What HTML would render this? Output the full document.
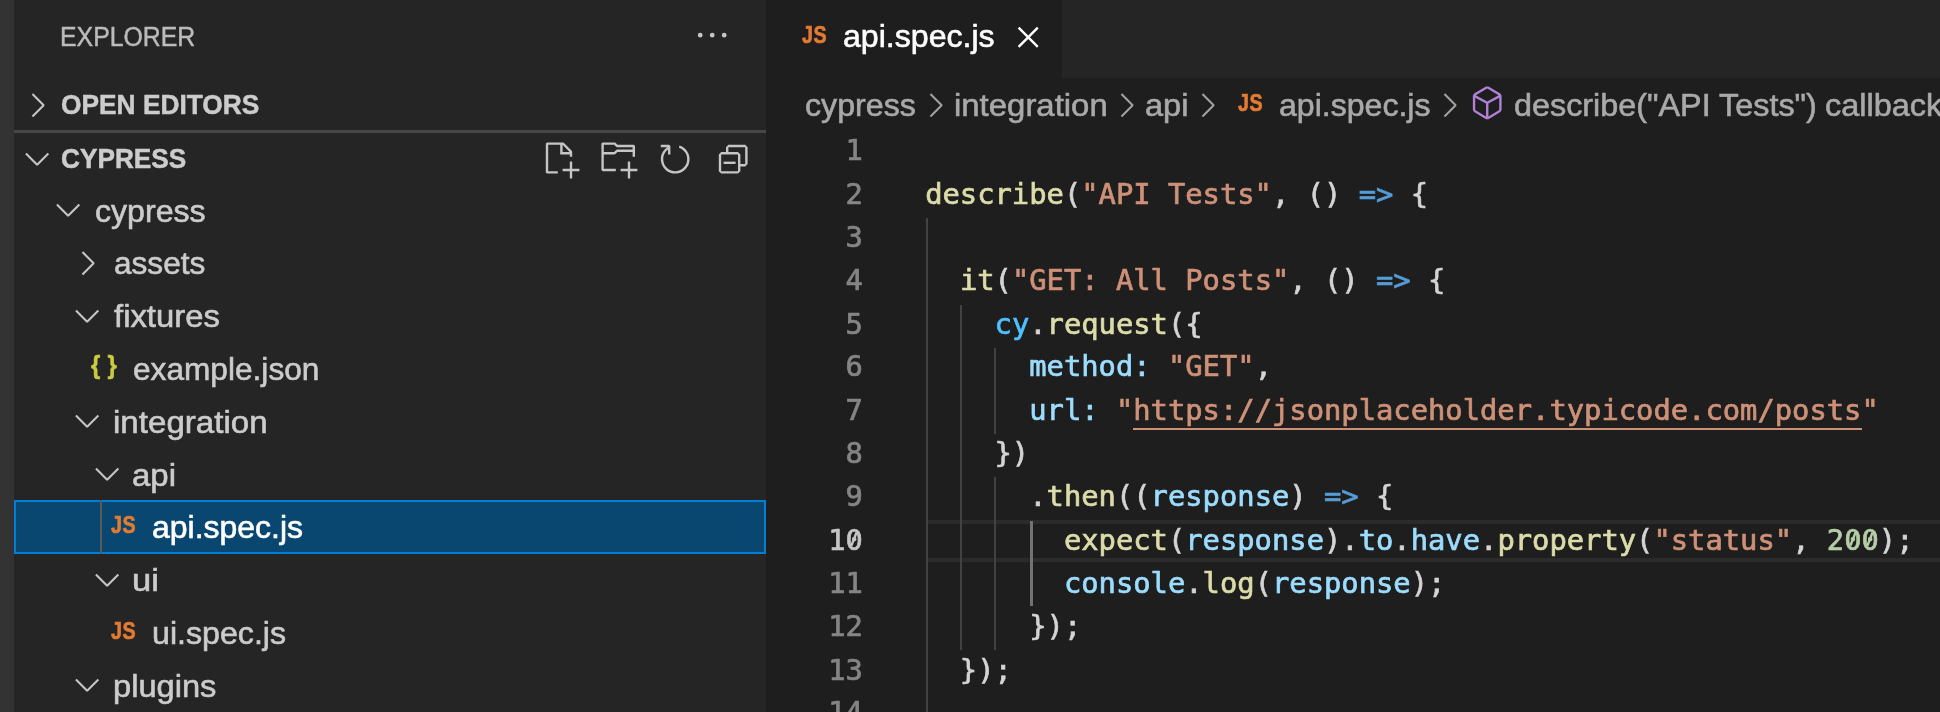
<!DOCTYPE html>
<html lang="en">
<head>
<meta charset="utf-8">
<title>api.spec.js - cypress</title>
<style>
html,body{margin:0;padding:0;}
body{width:1940px;height:712px;overflow:hidden;background:#1e1e1e;position:relative;
  font-family:"Liberation Sans",sans-serif;color:#cccccc;-webkit-font-smoothing:antialiased;}
.abs{position:absolute;}
#activity{left:0;top:0;width:14px;height:712px;background:#333333;}
#sidebar{left:14px;top:0;width:752px;height:712px;background:#252526;}
#tabbar{left:766px;top:0;width:1174px;height:78px;background:#252526;}
#tab{left:766px;top:0;width:296px;height:78px;background:#1e1e1e;}
.t{position:absolute;white-space:pre;line-height:1;transform-origin:0 0;}
#root{position:absolute;left:0;top:0;width:1940px;height:712px;will-change:transform;}
.ui{font-size:32.2px;line-height:33px;margin-top:0.3px;color:#cccccc;-webkit-text-stroke:0.6px currentColor;}
.hd{font-size:27px;color:#bbbbbb;-webkit-text-stroke:0.45px currentColor;}
.hb{font-size:27.6px;font-weight:bold;color:#cccccc;-webkit-text-stroke:0.5px #cccccc;}
.bc{font-size:32.2px;line-height:33px;margin-top:0.3px;color:#a9a9a9;-webkit-text-stroke:0.6px currentColor;}
svg.ic{position:absolute;width:38.4px;height:38.4px;fill:#c5c5c5;overflow:visible;}
.jsn{font-size:25.8px;font-weight:bold;color:#cbcb41;letter-spacing:7.6px;-webkit-text-stroke:0.5px #cbcb41;transform:scaleX(0.93);}
.js{position:absolute;font-weight:bold;color:#e37b33;font-size:24.6px;line-height:1;white-space:pre;transform-origin:0 0;transform:scaleX(0.80);-webkit-text-stroke:0.7px #e37b33;letter-spacing:0.6px;}
#sep{left:14px;top:129.7px;width:752px;height:3px;background:#474748;}
#sel{left:14px;top:500.2px;width:752px;height:53.4px;background:#094771;box-sizing:border-box;border:2.2px solid #007fd4;}
#selguide{left:99.9px;top:500.2px;width:2.3px;height:53.4px;background:#5a5a5a;}
/* editor */
.ln{position:absolute;left:780.7px;width:82.2px;text-align:right;font-family:"DejaVu Sans Mono","Liberation Mono",monospace;font-size:28.8px;line-height:43.2px;height:43.2px;color:#858585;white-space:pre;-webkit-text-stroke:0.7px currentColor;}
.cl{position:absolute;left:925.2px;font-family:"DejaVu Sans Mono","Liberation Mono",monospace;font-size:28.8px;line-height:43.2px;height:43.2px;color:#d4d4d4;white-space:pre;}
.cl span,.cl{-webkit-text-stroke:0.7px currentColor;}
.f{color:#dcdcaa}.s{color:#ce9178}.k{color:#569cd6}.v{color:#9cdcfe}.c{color:#4fc1ff}.n{color:#b5cea8}
.g{position:absolute;width:2.4px;background:#424242;}
.ga{position:absolute;width:2.5px;background:#727272;}
svg.z{position:absolute;overflow:visible;}
#hl{left:928.4px;top:520px;width:1012px;height:41.9px;box-sizing:border-box;border-top:4px solid #2b2b2b;border-bottom:4px solid #2b2b2b;}
#ul{left:1133px;top:427.8px;width:729px;height:2.4px;background:#ce9178;}
</style>
</head>
<body>
<div id="root">
<div id="activity" class="abs"></div>
<div id="sidebar" class="abs"></div>
<div id="tabbar" class="abs"></div>
<div id="tab" class="abs"></div>
<div id="sep" class="abs"></div>
<div id="sel" class="abs"></div>
<div id="selguide" class="abs"></div>

<!-- sidebar header -->
<div class="t hd" id="t_explorer" style="transform:scaleX(0.9197);margin-left:-2.03px;left:62px;top:24.3px;">EXPLORER</div>
<svg class="ic" style="left:692.5px;top:15.6px" viewBox="0 0 16 16"><path d="M4 8a1 1 0 1 1-2 0 1 1 0 0 1 2 0zm5 0a1 1 0 1 1-2 0 1 1 0 0 1 2 0zm5 0a1 1 0 1 1-2 0 1 1 0 0 1 2 0z"/></svg>

<svg class="ic" style="left:17.6px;top:86px" viewBox="0 0 16 16"><path fill-rule="evenodd" clip-rule="evenodd" d="M10.072 8.024L5.715 3.667l.618-.62L11 7.716v.618L6.333 13l-.618-.619 4.357-4.357z"/></svg>
<div class="t hb" id="t_open" style="transform:scaleX(0.9536);margin-left:-1.30px;left:62px;top:90.8px;">OPEN EDITORS</div>

<svg class="ic" style="left:18px;top:139px" viewBox="0 0 16 16"><path fill-rule="evenodd" clip-rule="evenodd" d="M7.976 10.072l4.357-4.357.62.618L8.284 11h-.618L3 6.333l.619-.618 4.357 4.357z"/></svg>
<div class="t hb" id="t_cyp" style="transform:scaleX(0.9496);margin-left:-1.38px;left:62px;top:144.6px;">CYPRESS</div>

<!-- section actions -->
<svg class="ic" style="left:541.2px;top:139.6px" viewBox="0 0 16 16"><path fill-rule="evenodd" clip-rule="evenodd" d="M9.5 1.1l3.4 3.5.1.4v2h-1V6H8V2H3v11h4v1H2.5l-.5-.5v-12l.5-.5h6.7l.3.1zM9 2v3h2.9L9 2zm4 14h-1v-3H9v-1h3V9h1v3h3v1h-3v3z"/></svg>
<svg class="ic" style="left:598.8px;top:139.6px" viewBox="0 0 16 16"><path fill-rule="evenodd" clip-rule="evenodd" d="M14.5 2H7.71l-.85-.85L6.51 1h-5l-.5.5v11l.5.5H7v-1H1.99V6h4.49l.35-.15.86-.86H14v1.5l-.001.51h1.011V2.5L14.5 2zm-.51 2h-6.5l-.35.15-.86.86H2v-3h4.29l.85.85.36.15H14l-.01.99zM13 16h-1v-3H9v-1h3V9h1v3h3v1h-3v3z"/></svg>
<svg class="ic" style="left:656.4px;top:139.6px" viewBox="0 0 16 16"><path fill-rule="evenodd" clip-rule="evenodd" d="M4.681 3H2V2h3.500l.5.5V6H5V4a5 5 0 1 0 4.530-.761l.302-.954A6 6 0 1 1 4.681 3z"/></svg>
<svg class="ic" style="left:714px;top:139.6px" viewBox="0 0 16 16"><path d="M9 9H4v1h5V9z"/><path fill-rule="evenodd" clip-rule="evenodd" d="M5 3l1-1h7l1 1v7l-1 1h-2v2l-1 1H3l-1-1V6l1-1h2V3zm1 2h4l1 1v4h2V3H6v2zm4 1H3v7h7V6z"/></svg>

<svg class="ic" style="left:49.2px;top:190.2px" viewBox="0 0 16 16"><path fill-rule="evenodd" clip-rule="evenodd" d="M7.976 10.072l4.357-4.357.62.618L8.284 11h-.618L3 6.333l.619-.618 4.357 4.357z"/></svg>
<div class="t ui" id="r0" style="left:95.0px;top:194.3px;transform:scaleX(0.9977);margin-left:-0.39px;">cypress</div>
<svg class="ic" style="left:68.4px;top:244.2px" viewBox="0 0 16 16"><path fill-rule="evenodd" clip-rule="evenodd" d="M10.072 8.024L5.715 3.667l.618-.62L11 7.716v.618L6.333 13l-.618-.619 4.357-4.357z"/></svg>
<div class="t ui" id="r1" style="left:114.2px;top:247.1px;transform:scaleX(0.9816);margin-left:-0.48px;">assets</div>
<svg class="ic" style="left:68.4px;top:295.8px" viewBox="0 0 16 16"><path fill-rule="evenodd" clip-rule="evenodd" d="M7.976 10.072l4.357-4.357.62.618L8.284 11h-.618L3 6.333l.619-.618 4.357 4.357z"/></svg>
<div class="t ui" id="r2" style="left:114.2px;top:299.9px;transform:scaleX(1.0204);margin-left:-0.61px;">fixtures</div>
<div class="t jsn" style="left:90.5px;top:352.9px;">{}</div>
<div class="t ui" id="r3" style="left:133.4px;top:352.7px;transform:scaleX(0.9829);margin-left:-0.84px;">example.json</div>
<svg class="ic" style="left:68.4px;top:401.4px" viewBox="0 0 16 16"><path fill-rule="evenodd" clip-rule="evenodd" d="M7.976 10.072l4.357-4.357.62.618L8.284 11h-.618L3 6.333l.619-.618 4.357 4.357z"/></svg>
<div class="t ui" id="r4" style="left:114.2px;top:405.5px;transform:scaleX(1.0285);margin-left:-1.59px;">integration</div>
<svg class="ic" style="left:87.6px;top:454.2px" viewBox="0 0 16 16"><path fill-rule="evenodd" clip-rule="evenodd" d="M7.976 10.072l4.357-4.357.62.618L8.284 11h-.618L3 6.333l.619-.618 4.357 4.357z"/></svg>
<div class="t ui" id="r5" style="left:133.4px;top:458.3px;transform:scaleX(1.0235);margin-left:-1.62px;">api</div>
<div class="js" style="left:111.0px;top:513.4px;">JS</div>
<div class="t ui" id="r6" style="left:152.6px;top:511.1px;color:#ffffff;transform:scaleX(0.9935);margin-left:-1.07px;">api.spec.js</div>
<svg class="ic" style="left:87.6px;top:559.8px" viewBox="0 0 16 16"><path fill-rule="evenodd" clip-rule="evenodd" d="M7.976 10.072l4.357-4.357.62.618L8.284 11h-.618L3 6.333l.619-.618 4.357 4.357z"/></svg>
<div class="t ui" id="r7" style="left:133.4px;top:563.9px;transform:scaleX(1.0719);margin-left:-1.71px;">ui</div>
<div class="js" style="left:111.0px;top:619.0px;">JS</div>
<div class="t ui" id="r8" style="left:152.6px;top:616.7px;transform:scaleX(0.9993);margin-left:-1.10px;">ui.spec.js</div>
<svg class="ic" style="left:68.4px;top:665.4px" viewBox="0 0 16 16"><path fill-rule="evenodd" clip-rule="evenodd" d="M7.976 10.072l4.357-4.357.62.618L8.284 11h-.618L3 6.333l.619-.618 4.357 4.357z"/></svg>
<div class="t ui" id="r9" style="left:114.2px;top:669.5px;transform:scaleX(1.0140);margin-left:-1.61px;">plugins</div>
<div class="js" style="left:801.6px;top:22.8px;">JS</div>
<div class="t ui" id="tabt" style="left:843.4px;top:19.8px;color:#ffffff;transform:scaleX(0.9971);margin-left:-0.84px;">api.spec.js</div>
<svg class="ic" style="left:1009.4px;top:18.4px;fill:#ffffff" viewBox="0 0 16 16"><path fill-rule="evenodd" clip-rule="evenodd" d="M8 8.707l3.646 3.647.708-.707L8.707 8l3.647-3.646-.707-.708L8 7.293 4.354 3.646l-.707.708L7.293 8l-3.646 3.646.707.708L8 8.707z"/></svg>
<div class="t bc" id="b0" style="left:805.6px;top:88.5px;transform:scaleX(1.0003);margin-left:-0.87px;">cypress</div>
<svg class="ic" style="left:916.3px;top:85.6px;fill:#a0a0a0" viewBox="0 0 16 16"><path fill-rule="evenodd" clip-rule="evenodd" d="M10.072 8.024L5.715 3.667l.618-.62L11 7.716v.618L6.333 13l-.618-.619 4.357-4.357z"/></svg>
<div class="t bc" id="b1" style="left:955.6px;top:88.5px;transform:scaleX(1.0228);margin-left:-2.05px;">integration</div>
<svg class="ic" style="left:1107.3px;top:85.6px;fill:#a0a0a0" viewBox="0 0 16 16"><path fill-rule="evenodd" clip-rule="evenodd" d="M10.072 8.024L5.715 3.667l.618-.62L11 7.716v.618L6.333 13l-.618-.619 4.357-4.357z"/></svg>
<div class="t bc" id="b2" style="left:1145.8px;top:88.5px;transform:scaleX(1.0120);margin-left:-1.29px;">api</div>
<svg class="ic" style="left:1187.9px;top:85.6px;fill:#a0a0a0" viewBox="0 0 16 16"><path fill-rule="evenodd" clip-rule="evenodd" d="M10.072 8.024L5.715 3.667l.618-.62L11 7.716v.618L6.333 13l-.618-.619 4.357-4.357z"/></svg>
<div class="js" style="left:1237.6px;top:90.7px;">JS</div>
<div class="t bc" id="b3" style="left:1279.2px;top:88.5px;transform:scaleX(0.9964);margin-left:-0.58px;">api.spec.js</div>
<svg class="ic" style="left:1430.3px;top:85.6px;fill:#a0a0a0" viewBox="0 0 16 16"><path fill-rule="evenodd" clip-rule="evenodd" d="M10.072 8.024L5.715 3.667l.618-.62L11 7.716v.618L6.333 13l-.618-.619 4.357-4.357z"/></svg>
<svg class="ic" style="left:1468.2px;top:83.5px;fill:#b180d7" viewBox="0 0 16 16"><path d="M13.51 4l-5-3h-1l-5 3-.49.86v6l.49.85 5 3h1l5-3 .49-.85v-6L13.51 4zm-6 9.56l-4.500-2.700V5.700l4.500 2.450v5.410zM3.270 4.700l4.740-2.840 4.740 2.840-4.740 2.590L3.270 4.700zm9.740 6.160l-4.500 2.700V8.150l4.500-2.450v5.160z"/></svg>
<div class="t bc" id="b4" style="left:1514.4px;top:88.5px;transform:scaleX(1.0051);margin-left:-0.90px;">describe("API Tests")</div>
<div class="t bc" id="b5" style="left:1825.6px;top:88.5px;transform:scaleX(1.0076);margin-left:-0.87px;">callback</div>
<div id="hl" class="abs"></div>
<div class="g" style="left:926.1px;top:218.2px;height:493.8px"></div>
<div class="g" style="left:960.0px;top:304.6px;height:345.6px"></div>
<div class="g" style="left:994.0px;top:347.8px;height:86.4px"></div>
<div class="g" style="left:994.0px;top:477.4px;height:172.8px"></div>
<div class="ga" style="left:1030.0px;top:520.6px;height:85.4px"></div>
<div id="ul" class="abs"></div>
<div class="ln" style="top:128.9px;">1</div>
<div class="ln" style="top:172.9px;">2</div>
<div class="cl" style="top:172.9px;"><span class="f">describe</span>(<span class="s">"API Tests"</span>, () <span class="k">=&gt;</span> {</div>
<div class="ln" style="top:215.5px;">3</div>
<div class="ln" style="top:259.2px;">4</div>
<div class="cl" style="top:259.2px;">  <span class="f">it</span>(<span class="s">"GET: All Posts"</span>, () <span class="k">=&gt;</span> {</div>
<div class="ln" style="top:302.8px;">5</div>
<div class="cl" style="top:302.8px;">    <span class="c">cy</span>.<span class="f">request</span>({</div>
<div class="ln" style="top:345.4px;">6</div>
<div class="cl" style="top:345.4px;">      <span class="v">method:</span> <span class="s">"GET"</span>,</div>
<div class="ln" style="top:388.7px;">7</div>
<div class="cl" style="top:388.7px;">      <span class="v">url:</span> <span class="s">"https:<span>//</span>jsonplaceholder.typicode.com/posts"</span></div>
<div class="ln" style="top:432.1px;">8</div>
<div class="cl" style="top:432.1px;">    })</div>
<div class="ln" style="top:475.4px;">9</div>
<div class="cl" style="top:475.4px;">      .<span class="f">then</span>((<span class="v">response</span>) <span class="k">=&gt;</span> {</div>
<div class="ln" style="top:518.7px;color:#c6c6c6;">10</div>
<div class="cl" style="top:518.7px;">        <span class="f">expect</span>(<span class="v">response</span>).<span class="v">to</span>.<span class="v">have</span>.<span class="f">property</span>(<span class="s">"status"</span>, <span class="n">200</span>);</div>
<div class="ln" style="top:562.0px;">11</div>
<div class="cl" style="top:562.0px;">        <span class="v">console</span>.<span class="f">log</span>(<span class="v">response</span>);</div>
<div class="ln" style="top:605.3px;">12</div>
<div class="cl" style="top:605.3px;">      });</div>
<div class="ln" style="top:648.6px;">13</div>
<div class="cl" style="top:648.6px;">  });</div>
<div class="ln" style="top:691.0px;">14</div>
<svg class="z" style="left:850.2px;top:531.4px" width="8" height="16" viewBox="-4 -8 8 16"><line x1="-2.6" y1="6.6" x2="2.6" y2="-6.6" stroke="#c6c6c6" stroke-width="2.5"/></svg>
<svg class="z" style="left:1848.8px;top:531.4px" width="8" height="16" viewBox="-4 -8 8 16"><line x1="-2.6" y1="6.6" x2="2.6" y2="-6.6" stroke="#b5cea8" stroke-width="2.5"/></svg>
<svg class="z" style="left:1866.2px;top:531.4px" width="8" height="16" viewBox="-4 -8 8 16"><line x1="-2.6" y1="6.6" x2="2.6" y2="-6.6" stroke="#b5cea8" stroke-width="2.5"/></svg>
</div>
</body>
</html>
